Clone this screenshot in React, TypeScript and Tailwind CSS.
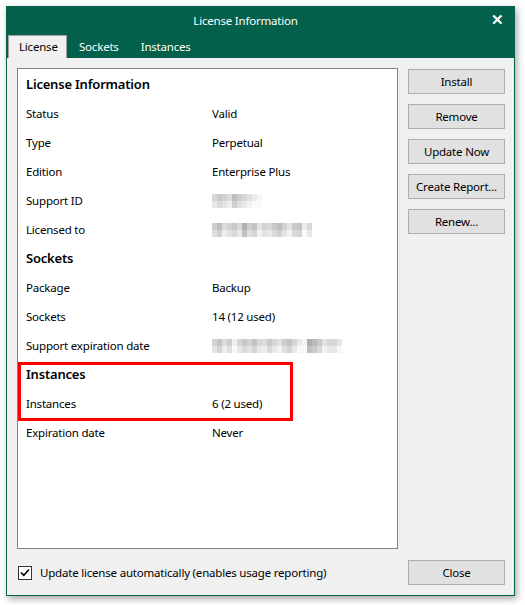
import React from "react";

type Row = { label: string; value?: string; blur?: number[] };

const font = { fontFamily: '"Noto Sans", "Open Sans", sans-serif' };

function Blur({ cells }: { cells: number[] }) {
  // pixelated, blurred-out value
  return (
    <div className="flex h-[14px] flex-col">
      <div className="flex h-[7px]">
        {cells.map((c, i) => (
          <div key={i} className="h-full w-[5px]" style={{ background: `rgb(${c},${c},${c})` }} />
        ))}
      </div>
      <div className="flex h-[7px]">
        {cells.map((c, i) => (
          <div key={i} className="h-full w-[5px]" style={{ background: `rgb(${Math.min(250, c + 18)},${Math.min(250, c + 18)},${Math.min(250, c + 18)})` }} />
        ))}
      </div>
    </div>
  );
}

const b1 = [215, 200, 210, 220, 190, 205, 215, 225, 235, 245];
const b2 = [205, 190, 220, 210, 200, 215, 175, 205, 195, 225, 210, 215, 200, 190, 210, 225, 200, 195, 235, 215];
const b3 = [210, 195, 220, 205, 240, 215, 200, 210, 195, 215, 220, 200, 215, 225, 205, 195, 215, 235, 245, 175, 185, 200, 225, 215, 215, 230];

function InfoRow({ label, value, blur }: Row) {
  return (
    <div className="flex h-[29px] items-center text-[11.5px] tracking-[-0.2px] text-black">
      <div className="w-[186px]">{label}</div>
      {blur ? <Blur cells={blur} /> : <div>{value}</div>}
    </div>
  );
}

function Heading({ children }: { children: React.ReactNode }) {
  return <div className="flex h-[29px] items-center text-[13px] font-semibold tracking-[-0.2px] text-black">{children}</div>;
}

function Btn({ children }: { children: React.ReactNode }) {
  return (
    <button
      type="button"
      className="flex h-[25px] w-[97px] shrink-0 items-center justify-center border border-[#adadad] bg-[#e1e1e1] text-[11.5px] tracking-[-0.2px] text-black"
    >
      {children}
    </button>
  );
}

export default function App() {
  return (
    <div className="h-[605px] w-[525px] bg-white pl-[6px] pt-[6px]" style={font}>
      <div className="flex h-[590px] w-[509px] flex-col border border-[#02604b] bg-[#f0f0f0] shadow-[2px_3px_7px_rgba(0,0,0,0.35)]">
        <div className="bg-[#02604b]">
          <div className="relative flex h-[28px] items-center justify-center pr-[30px] text-[11.5px] tracking-[-0.2px] text-white">
            License Information
            <span className="absolute right-[10px] top-[5px] text-[15px] font-bold leading-none">✕</span>
          </div>
          <div className="flex h-[23px] items-end pl-[1px] text-[11.5px] tracking-[-0.2px] text-white">
            <div className="flex h-[23px] w-[59px] items-center border border-b-0 border-[#a0a0a0] bg-[#f0f0f0] pl-[10px] text-black">
              License
            </div>
            <div className="flex h-[23px] items-center pl-[12px]">Sockets</div>
            <div className="flex h-[23px] items-center pl-[22px]">Instances</div>
          </div>
        </div>

        <div className="flex flex-1 flex-col pb-[10px] pl-[10px] pr-[9px] pt-[10px]">
          <div className="flex gap-[10px]">
            <div className="h-[481px] w-[381px] shrink-0 border border-[#828282] bg-white pl-[8px] pt-[1px]">
              <Heading>License Information</Heading>
              <InfoRow label="Status" value="Valid" />
              <InfoRow label="Type" value="Perpetual" />
              <InfoRow label="Edition" value="Enterprise Plus" />
              <InfoRow label="Support ID" blur={b1} />
              <InfoRow label="Licensed to" blur={b2} />
              <Heading>Sockets</Heading>
              <InfoRow label="Package" value="Backup" />
              <InfoRow label="Sockets" value="14 (12 used)" />
              <InfoRow label="Support expiration date" blur={b3} />
              <div className="relative">
                <Heading>Instances</Heading>
                <InfoRow label="Instances" value="6 (2 used)" />
                <div className="pointer-events-none absolute left-[-8px] top-[2px] h-[59px] w-[275px] border-[3px] border-[#ff0000]" />
              </div>
              <InfoRow label="Expiration date" value="Never" />
            </div>
            <div className="flex flex-col gap-[10px] pt-[1px]">
              <Btn>Install</Btn>
              <Btn>Remove</Btn>
              <Btn>Update Now</Btn>
              <Btn>Create Report...</Btn>
              <Btn>Renew...</Btn>
            </div>
          </div>
          <div className="mt-[11px] flex items-center justify-between">
            <label className="flex items-center gap-[8px] pl-[1px] text-[11.5px] tracking-[-0.2px] text-black">
              <span className="flex h-[14px] w-[14px] items-center justify-center border border-[#333] bg-white">
                <svg width="10" height="9" viewBox="0 0 10 9">
                  <path d="M1 4.5 L3.8 7.3 L9 1.5" fill="none" stroke="#000" strokeWidth="1.6" />
                </svg>
              </span>
              Update license automatically (enables usage reporting)
            </label>
            <Btn>Close</Btn>
          </div>
        </div>
      </div>
    </div>
  );
}
